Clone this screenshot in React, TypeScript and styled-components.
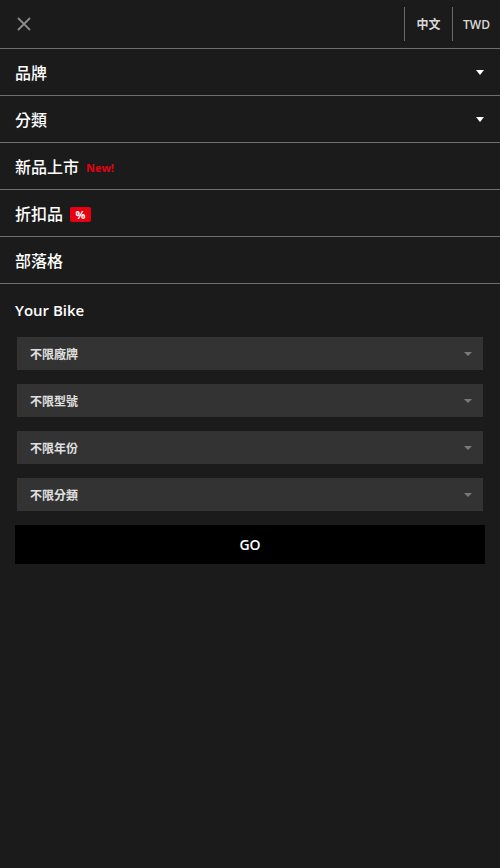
import React from "react";
import styled, { createGlobalStyle } from "styled-components";

const Global = createGlobalStyle`
  html, body { margin: 0; padding: 0; background: #1b1b1b; }
  body { font-family: "Open Sans", "Noto Sans CJK TC", sans-serif; color: #fff; }
  * { box-sizing: border-box; }
`;

const Page = styled.div`
  width: 500px;
  min-height: 868px;
  background: #1b1b1b;
`;

const Header = styled.div`
  height: 49px;
  display: flex;
  align-items: center;
  border-bottom: 1px solid #707070;
`;

const CloseBtn = styled.button`
  width: 48px;
  height: 48px;
  padding: 0;
  border: 0;
  background: transparent;
  display: flex;
  align-items: center;
  justify-content: center;
  color: #8a8a8a;
`;

const Spacer = styled.div`
  flex: 1;
`;

const HeaderItem = styled.div<{ $w: number }>`
  width: ${(p) => p.$w}px;
  height: 34px;
  display: flex;
  align-items: center;
  justify-content: center;
  border-left: 1px solid #6a6a6a;
  font-family: "Open Sans", "Noto Sans CJK TC", sans-serif;
  font-size: 12px;
  font-weight: 600;
  color: #d8d8d8;
`;

const MenuRow = styled.div`
  height: 47px;
  display: flex;
  align-items: center;
  padding: 0 16px 0 15px;
  border-bottom: 1px solid #707070;
`;

const MenuLabel = styled.span`
  font-family: "Noto Sans CJK TC", sans-serif;
  font-size: 16px;
  font-weight: 500;
  color: #fff;
`;

const NewTag = styled.span`
  margin-left: 7px;
  font-family: "Open Sans", sans-serif;
  font-size: 11px;
  font-weight: 700;
  color: #e60012;
  margin-top: 2px;
`;

const PctBadge = styled.span`
  margin-left: 7px;
  width: 21px;
  height: 15px;
  border-radius: 2px;
  background: #e60012;
  color: #fff;
  font-family: "Open Sans", sans-serif;
  font-size: 11px;
  font-weight: 700;
  display: inline-flex;
  align-items: center;
  justify-content: center;
  margin-top: 2px;
`;

const Caret = styled.span<{ $c: string; $w: number; $h: number }>`
  margin-left: auto;
  width: 0;
  height: 0;
  border-left: ${(p) => p.$w / 2}px solid transparent;
  border-right: ${(p) => p.$w / 2}px solid transparent;
  border-top: ${(p) => p.$h}px solid ${(p) => p.$c};
`;

const BikeSection = styled.div`
  padding: 16px 15px 0 15px;
`;

const BikeTitle = styled.div`
  font-family: "Open Sans", sans-serif;
  font-size: 15px;
  font-weight: 600;
  color: #fff;
  line-height: 20px;
  margin-bottom: 17px;
`;

const SelectList = styled.div`
  display: flex;
  flex-direction: column;
  gap: 14px;
  padding: 0 2px;
`;

const SelectBox = styled.div`
  height: 33px;
  background: #333333;
  display: flex;
  align-items: center;
  padding: 0 11px 0 13px;
`;

const SelectText = styled.span`
  font-family: "Noto Sans CJK TC", sans-serif;
  font-size: 12px;
  font-weight: 700;
  color: #e0e0e0;
`;

const GoButton = styled.button`
  margin-top: 14px;
  width: 470px;
  height: 39px;
  border: 0;
  background: #000;
  color: #fff;
  font-family: "Open Sans", sans-serif;
  font-size: 14px;
  font-weight: 600;
  display: flex;
  align-items: center;
  justify-content: center;
`;

const menu = [
  { label: "品牌", caret: true },
  { label: "分類", caret: true },
  { label: "新品上市", tag: "new" },
  { label: "折扣品", tag: "pct" },
  { label: "部落格" },
];

const selects = ["不限廠牌", "不限型號", "不限年份", "不限分類"];

export default function App() {
  return (
    <Page>
      <Global />
      <Header>
        <CloseBtn aria-label="close">
          <svg width="14" height="14" viewBox="0 0 14 14">
            <path d="M1 1 L13 13 M13 1 L1 13" stroke="currentColor" strokeWidth="1.8" fill="none" />
          </svg>
        </CloseBtn>
        <Spacer />
        <HeaderItem $w={48}>中文</HeaderItem>
        <HeaderItem $w={48}>TWD</HeaderItem>
      </Header>
      {menu.map((m) => (
        <MenuRow key={m.label}>
          <MenuLabel>{m.label}</MenuLabel>
          {m.tag === "new" && <NewTag>New!</NewTag>}
          {m.tag === "pct" && <PctBadge>%</PctBadge>}
          {m.caret && <Caret $c="#fff" $w={8} $h={5} />}
        </MenuRow>
      ))}
      <BikeSection>
        <BikeTitle>Your Bike</BikeTitle>
        <SelectList>
          {selects.map((s) => (
            <SelectBox key={s}>
              <SelectText>{s}</SelectText>
              <Caret $c="#7a7a7a" $w={8} $h={4} />
            </SelectBox>
          ))}
        </SelectList>
        <GoButton>GO</GoButton>
      </BikeSection>
    </Page>
  );
}
